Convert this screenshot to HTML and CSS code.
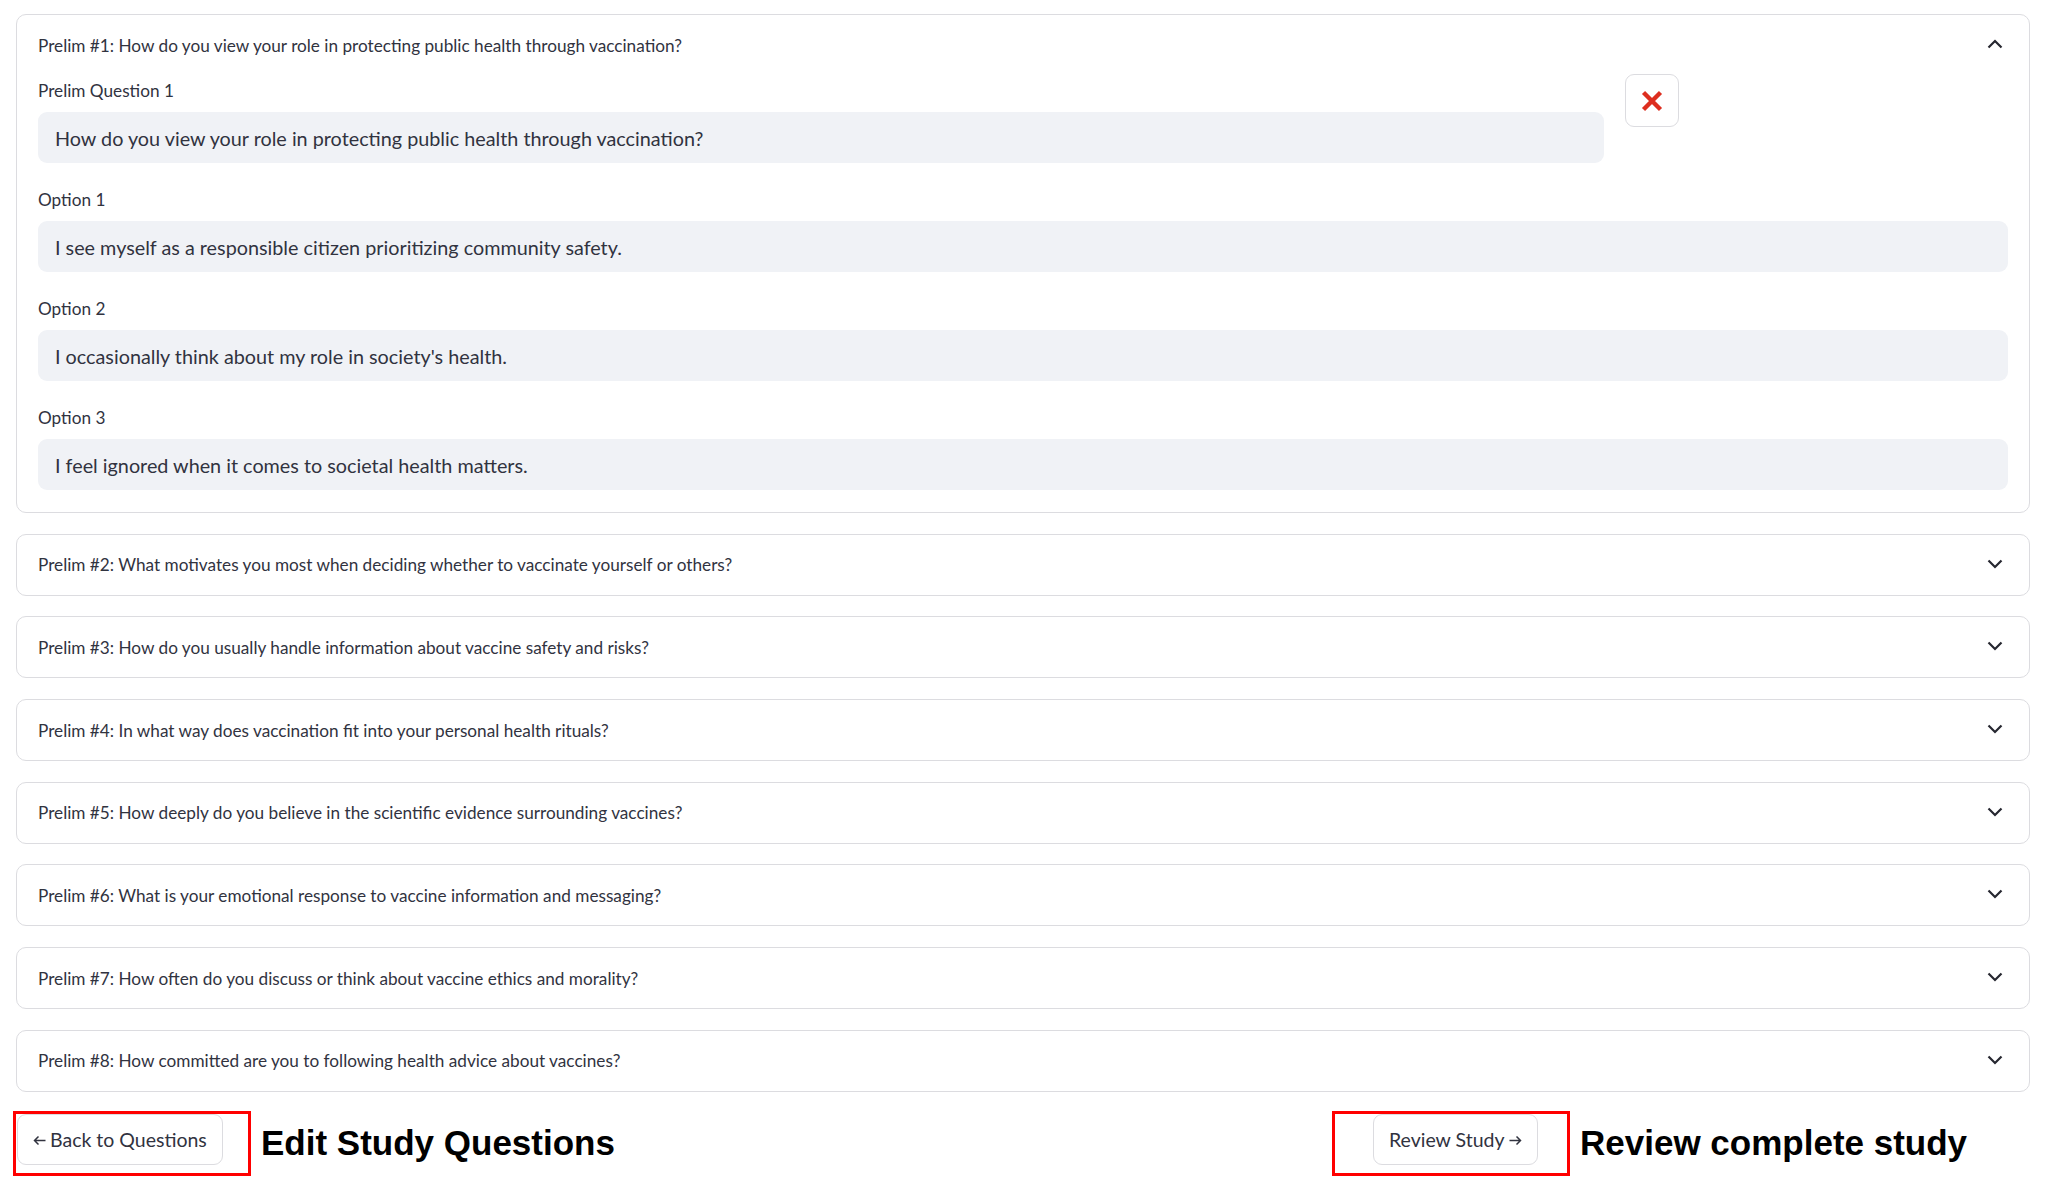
FILE: index.html
```html
<!DOCTYPE html>
<html lang="en">
<head>
<meta charset="utf-8">
<title>Prelim Questions</title>
<link rel="stylesheet" href="styles.css">
</head>
<body>
<main class="page">
  <section class="expander">
    <div class="exp-header">
      <span class="exp-title">Prelim #1: How do you view your role in protecting public health through vaccination?</span>
      <svg class="chev chev-up" width="16" height="10" viewBox="0 0 16 10"><path d="M1.5 8.5 L8 2 L14.5 8.5" fill="none" stroke="#262730" stroke-width="2.2"/></svg>
    </div>
    <div class="exp-body">
      <div class="row-q">
        <div class="field">
          <div class="field-label">Prelim Question 1</div>
          <div class="input">How do you view your role in protecting public health through vaccination?</div>
        </div>
        <div class="del-col">
          <button class="del-btn" type="button" aria-label="Delete question">
            <svg width="22" height="22" viewBox="0 0 22 22"><path d="M2.5 2.5 L19.5 19.5 M19.5 2.5 L2.5 19.5" stroke="#dd2e1f" stroke-width="4.4" stroke-linecap="butt"/></svg>
          </button>
        </div>
      </div>
      <div class="field">
        <div class="field-label">Option 1</div>
        <div class="input">I see myself as a responsible citizen prioritizing community safety.</div>
      </div>
      <div class="field">
        <div class="field-label">Option 2</div>
        <div class="input">I occasionally think about my role in society's health.</div>
      </div>
      <div class="field">
        <div class="field-label">Option 3</div>
        <div class="input">I feel ignored when it comes to societal health matters.</div>
      </div>
    </div>
  </section>

  <section class="expander">
    <div class="exp-header">
      <span class="exp-title">Prelim #2: What motivates you most when deciding whether to vaccinate yourself or others?</span>
      <svg class="chev" width="16" height="10" viewBox="0 0 16 10"><path d="M1.5 1.5 L8 8 L14.5 1.5" fill="none" stroke="#262730" stroke-width="2.2"/></svg>
    </div>
  </section>
  <section class="expander">
    <div class="exp-header">
      <span class="exp-title">Prelim #3: How do you usually handle information about vaccine safety and risks?</span>
      <svg class="chev" width="16" height="10" viewBox="0 0 16 10"><path d="M1.5 1.5 L8 8 L14.5 1.5" fill="none" stroke="#262730" stroke-width="2.2"/></svg>
    </div>
  </section>
  <section class="expander">
    <div class="exp-header">
      <span class="exp-title">Prelim #4: In what way does vaccination fit into your personal health rituals?</span>
      <svg class="chev" width="16" height="10" viewBox="0 0 16 10"><path d="M1.5 1.5 L8 8 L14.5 1.5" fill="none" stroke="#262730" stroke-width="2.2"/></svg>
    </div>
  </section>
  <section class="expander">
    <div class="exp-header">
      <span class="exp-title">Prelim #5: How deeply do you believe in the scientific evidence surrounding vaccines?</span>
      <svg class="chev" width="16" height="10" viewBox="0 0 16 10"><path d="M1.5 1.5 L8 8 L14.5 1.5" fill="none" stroke="#262730" stroke-width="2.2"/></svg>
    </div>
  </section>
  <section class="expander">
    <div class="exp-header">
      <span class="exp-title">Prelim #6: What is your emotional response to vaccine information and messaging?</span>
      <svg class="chev" width="16" height="10" viewBox="0 0 16 10"><path d="M1.5 1.5 L8 8 L14.5 1.5" fill="none" stroke="#262730" stroke-width="2.2"/></svg>
    </div>
  </section>
  <section class="expander">
    <div class="exp-header">
      <span class="exp-title">Prelim #7: How often do you discuss or think about vaccine ethics and morality?</span>
      <svg class="chev" width="16" height="10" viewBox="0 0 16 10"><path d="M1.5 1.5 L8 8 L14.5 1.5" fill="none" stroke="#262730" stroke-width="2.2"/></svg>
    </div>
  </section>
  <section class="expander">
    <div class="exp-header">
      <span class="exp-title">Prelim #8: How committed are you to following health advice about vaccines?</span>
      <svg class="chev" width="16" height="10" viewBox="0 0 16 10"><path d="M1.5 1.5 L8 8 L14.5 1.5" fill="none" stroke="#262730" stroke-width="2.2"/></svg>
    </div>
  </section>

  <div class="nav-row">
    <div class="nav-col nav-left">
      <button class="btn" type="button">
        <svg class="arrow" width="13" height="11" viewBox="0 0 13 11"><path d="M12.5 5.5 H1.5 M5.5 1.5 L1.5 5.5 L5.5 9.5" fill="none" stroke="#31333f" stroke-width="1.5"/></svg>
        <span>Back to Questions</span>
      </button>
      <div class="annot annot-left">
        <span class="annot-box"></span>
        <span class="annot-label">Edit Study Questions</span>
      </div>
    </div>
    <div class="nav-col"></div>
    <div class="nav-col nav-right">
      <button class="btn" type="button">
        <span>Review Study</span>
        <svg class="arrow" width="13" height="11" viewBox="0 0 13 11"><path d="M0.5 5.5 H11.5 M7.5 1.5 L11.5 5.5 L7.5 9.5" fill="none" stroke="#31333f" stroke-width="1.5"/></svg>
      </button>
      <div class="annot annot-right">
        <span class="annot-box"></span>
        <span class="annot-label">Review complete study</span>
      </div>
    </div>
  </div>
</main>
</body>
</html>
```

FILE: styles.css
```css
* {
  box-sizing: border-box;
}

html, body {
  margin: 0;
  padding: 0;
  background: #ffffff;
}

body {
  font-family: Lato, "Noto Sans", sans-serif;
  color: #31333f;
}

.page {
  padding: 14px 18px 0 16px;
  display: flex;
  flex-direction: column;
  gap: 20.7px;
}

.expander {
  border: 1px solid #dcdce0;
  border-radius: 10px;
  background: #ffffff;
}

.exp-header {
  height: 60px;
  display: flex;
  align-items: center;
  justify-content: space-between;
  padding: 0 26px 0 21px;
  font-size: 17.2px;
  color: #31333f;
}

.chev {
  display: block;
  margin-top: -2px;
}

.exp-body {
  padding: 0 21px 22px 21px;
  display: flex;
  flex-direction: column;
  gap: 21px;
}

.row-q {
  display: grid;
  grid-template-columns: 1566fr 383fr;
  column-gap: 21px;
}

.field-label {
  font-size: 17.2px;
  line-height: 28px;
  padding-top: 2px;
  margin-bottom: 7px;
}

.input {
  height: 51px;
  background: #f0f2f6;
  border-radius: 9px;
  padding-left: 17px;
  font-size: 19.8px;
  display: flex;
  align-items: center;
  color: #31333f;
}

.del-col {
  display: flex;
  align-items: flex-start;
}

.del-btn {
  width: 54px;
  height: 53px;
  margin-top: -1px;
  border: 1px solid #dcdce0;
  border-radius: 9px;
  background: #ffffff;
  padding: 0;
  display: flex;
  align-items: center;
  justify-content: center;
}

.nav-row {
  margin-top: 1px;
  display: grid;
  grid-template-columns: repeat(3, 1fr);
  column-gap: 20px;
}

.nav-col {
  position: relative;
  height: 62px;
}

.nav-left .btn {
  margin-left: 1px;
}

.nav-right .btn {
  margin-left: 1px;
}

.btn {
  height: 51px;
  padding: 0 15px;
  border: 1px solid #dcdce0;
  border-radius: 9px;
  background: #ffffff;
  font-family: Lato, "Noto Sans", sans-serif;
  font-size: 19.5px;
  color: #31333f;
  display: inline-flex;
  align-items: center;
  gap: 4px;
}

.arrow {
  display: block;
  margin-top: 2px;
}

.annot {
  position: absolute;
  top: -3px;
  display: flex;
  align-items: center;
  gap: 10px;
  pointer-events: none;
}

.annot-left {
  left: -3px;
}

.annot-right {
  left: -40px;
}

.annot-box {
  display: block;
  width: 238px;
  height: 65px;
  border: 3px solid #ff0000;
}

.annot-label {
  font-family: "Liberation Sans", Arial, sans-serif;
  font-weight: bold;
  font-size: 35px;
  color: #000000;
  white-space: nowrap;
}
```
